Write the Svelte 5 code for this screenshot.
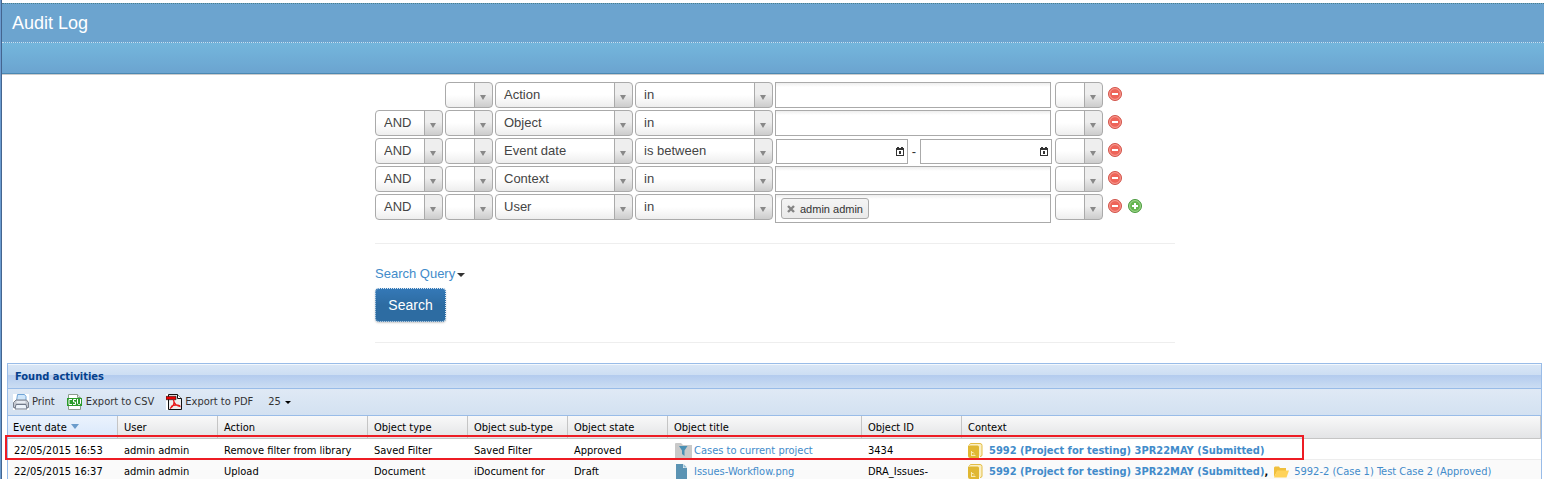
<script>
  const filters = [
    { id: 'action', join: '', field: 'Action', op: 'in', kind: 'text' },
    { id: 'object', join: 'AND', field: 'Object', op: 'in', kind: 'text' },
    { id: 'date', join: 'AND', field: 'Event date', op: 'is between', kind: 'range' },
    { id: 'context', join: 'AND', field: 'Context', op: 'in', kind: 'text' },
    { id: 'user', join: 'AND', field: 'User', op: 'in', kind: 'tags', last: true }
  ];
  const columns = ['Event date', 'User', 'Action', 'Object type', 'Object sub-type', 'Object state', 'Object title', 'Object ID', 'Context'];
  const project = '5992 (Project for testing) 3PR22MAY (Submitted)';
  const rows = [
    { cells: ['22/05/2015 16:53', 'admin admin', 'Remove filter from library', 'Saved Filter', 'Saved Filter', 'Approved'], icon: 'filter', title: 'Cases to current project', id: '3434', extra: '' },
    { cells: ['22/05/2015 16:37', 'admin admin', 'Upload', 'Document', 'iDocument for', 'Draft'], icon: 'doc', title: 'Issues-Workflow.png', id: 'DRA_Issues-', extra: '5992-2 (Case 1) Test Case 2 (Approved)' }
  ];
</script>

{#snippet pick(label, value)}
  <select class="pick" aria-label={label}><option>{value}</option></select>
{/snippet}

{#snippet dateBox(label)}
  <span class="date">
    <input type="text" aria-label={label} />
    <button type="button" aria-label="Open calendar">
      <svg width="8" height="9" viewBox="0 0 8 9" shape-rendering="crispEdges"><path fill="#333" fill-rule="evenodd" d="M0 1h1V0h2v1h2V0h2v1h1v8H0zM1 3v5h6V3zM3 4h2v3H3z" /></svg>
    </button>
  </span>
{/snippet}

<div class="shell">
  <header>
    <h1>Audit Log</h1>
    <div class="band"></div>
  </header>
  <main>
    <form class="search" onsubmit={(e) => e.preventDefault()}>
      <div class="filters">
        {#each filters as f (f.id)}
          <div class="row">
            <div>{#if f.join}{@render pick('Join', f.join)}{/if}</div>
            {@render pick('Opening bracket', '')}
            {@render pick('Field', f.field)}
            {@render pick('Operator', f.op)}
            {#if f.kind === 'text'}
              <input class="value" type="text" aria-label={f.field} />
            {:else if f.kind === 'range'}
              <div class="range">{@render dateBox('From')}<span>-</span>{@render dateBox('To')}</div>
            {:else}
              <div class="tags">
                <span class="tag">
                  <button type="button" aria-label="Remove admin admin"><svg width="8" height="8" viewBox="0 0 8 8"><path d="M1 1l6 6M7 1L1 7" stroke="#858585" stroke-width="2.4" /></svg></button>
                  admin admin
                </span>
                <input type="text" aria-label="User" />
              </div>
            {/if}
            <div class="close">{@render pick('Closing bracket', '')}</div>
            <div class="acts">
              <button type="button" aria-label="Remove condition">
                <svg width="14" height="14" viewBox="0 0 14 14"><circle cx="7" cy="7" r="6.5" fill="#ee6459" stroke="#d0564c" /><circle cx="7" cy="7" r="5.4" fill="none" stroke="#f8a59c" stroke-width=".9" /><path d="M4 7h6" stroke="#fff" stroke-width="2" /></svg>
              </button>
              {#if f.last}
                <button type="button" aria-label="Add condition">
                  <svg width="14" height="14" viewBox="0 0 14 14"><circle cx="7" cy="7" r="6.5" fill="#65b54e" stroke="#4c9a40" /><circle cx="7" cy="7" r="5.4" fill="none" stroke="#a9d998" stroke-width=".9" /><path d="M4 7h6M7 4v6" stroke="#fff" stroke-width="2" /></svg>
                </button>
              {/if}
            </div>
          </div>
        {/each}
      </div>
      <hr />
      <a class="query" href="#query">Search Query<i class="caret"></i></a>
      <button class="go" type="submit">Search</button>
      <hr class="end" />
    </form>

    <section class="panel">
      <h2>Found activities</h2>
      <div class="tools">
        <button type="button">
          <svg width="16" height="16" viewBox="0 0 16 16"><path fill="#fff" d="M0 0h16v16H0z" /><path d="M3.500 7L4.500.5h7l1.500 2v5" fill="#cfe6fa" stroke="#6fa3d6" /><path d="M.5 8.500L3 6h10.500l2 2.500v5H.5z" fill="#c3c7cf" stroke="#7a808c" /><path d="M3 10.500h10l1 4.500H2z" fill="#eef4fb" stroke="#6f7888" /><path d="M3.500 8h9" stroke="#f3f8ff" stroke-width="1.500" /></svg>
          Print
        </button>
        <button type="button" class="csv">
          <svg width="16" height="16" viewBox="0 0 16 16"><path d="M1.500.5h9l3 3v12h-12z" fill="#fff" stroke="#8c9c8c" /><path d="M10.500.5v3h3" fill="#e6eee6" stroke="#8c9c8c" /><path fill="#2b9b2a" d="M0 4h15v8H0z" /><path d="M5 5.500H2v5h3M9 5.500H6.500v2.500h2v2.500H6M10.500 5v4.500l1 1h1l1-1V5" fill="none" stroke="#fff" /></svg>
          Export to CSV
        </button>
        <button type="button" class="pdf">
          <svg width="16" height="16" viewBox="0 0 16 16"><path fill="#fff" d="M0 0h3v16H0z" /><path d="M2.500.5h9l4 4v11h-13z" fill="#eee" stroke="#111" /><path d="M11.500.5v4h4" fill="#fff" stroke="#111" /><path fill="#e80000" stroke="#111" stroke-width=".6" d="M0 2.300h10v3.400H0z" /><path d="M7.500 6c1.500 3-.5 6.500-3.500 8.500M7.500 6c.5 4 3.500 6 7 6.500M5 12.500c3-2 6-2 9-.5" fill="none" stroke="#e81818" stroke-width="1.400" /></svg>
          Export to PDF
        </button>
        <button type="button" class="size">25<i class="caret"></i></button>
      </div>
      <div class="grid">
        <table>
          <colgroup>
            <col class="w110" /><col class="w100" /><col class="w150" /><col class="w100" /><col class="w100" /><col class="w100" /><col class="w194" /><col class="w100" /><col />
          </colgroup>
          <thead>
            <tr>
              {#each columns as c, i}
                <th class:sorted={i === 0}>{c}{#if i === 0}<svg width="8" height="5" viewBox="0 0 8 5"><path d="M0 0h8L4 5z" fill="#6a9bcb" /></svg>{/if}</th>
              {/each}
            </tr>
          </thead>
          <tbody>
            {#each rows as r}
              <tr>
                {#each r.cells as c}<td>{c}</td>{/each}
                <td>
                  <span class="line">
                    {#if r.icon === 'filter'}
                      <svg width="18" height="15" viewBox="0 0 18 15"><path d="M1 1q0-1 1-1h5l2 2h9v13H1z" fill="#c9c9c9" /><path d="M5 3h8.500L10.500 7.500V13L8 11V7.500z" fill="#4a8fb3" /></svg>
                    {:else}
                      <svg width="18" height="15" viewBox="0 0 18 15"><path d="M2 0h7v4h4v11H2z" fill="#5b93b3" /><path d="M9.500 0L13 3.500H9.500z" fill="#8fb9cf" /></svg>
                    {/if}
                    <a href="#item">{r.title}</a>
                  </span>
                </td>
                <td>{r.id}</td>
                <td>
                  <span class="line">
                    <svg width="15" height="15" viewBox="0 0 15 15"><path d="M1.500 2V1.500Q2 .5 3 .5h9q2 0 2 2V12q0 1.500-2 1.500" fill="#fbf0c4" stroke="#e3bd45" /><path d="M1 2.500h8.500q1.500 0 1.500 1.500v11H2q-2 0-2-2V2.500z" fill="#e0b732" /><path d="M3.500 8v5M3.500 9.500h2M3.500 12.500h4M5.500 11h1" stroke="#f8e9b0" fill="none" /></svg>
                    <a class="strong" href="#project">{project}</a>{#if r.extra}<b>,</b>
                      <svg class="folder" width="15" height="12" viewBox="0 0 15 12"><path d="M0 11V1.500L1 .5h4l1 1.500h6v3H3.500z" fill="#f0bf3c" /><path d="M3 4.500h12L12.500 11.500H0z" fill="#ffd35a" /></svg>
                      <a href="#case">{r.extra}</a>
                    {/if}
                  </span>
                </td>
              </tr>
            {/each}
          </tbody>
        </table>
        <div class="highlight"></div>
      </div>
    </section>
  </main>
</div>

<style>
  :global(body) { overflow: hidden; background: #fff; }
  .shell {
    box-sizing: border-box; min-height: 100vh; padding-top: 3px;
    border-left: 1px solid #6a9bd0; box-shadow: inset 1px 0 #44658f;
    padding-left: 1px; font: 13px/18px "Liberation Sans", Arial, sans-serif; color: #444;
  }
  button { font: inherit; color: inherit; background: none; border: 0; padding: 0; }
  input, select { font: inherit; color: inherit; box-sizing: border-box; }
  svg { display: block; flex: none; }
  header { border-bottom: 1px solid #ccc; }
  h1 {
    margin: 0; padding: 0 10px; font-size: 18px; line-height: 38px; font-weight: 400; color: #fff;
    background: #6ca4cf; border-top: 1px dotted #4a7f8c; border-bottom: 1px dotted #c8e0f0;
  }
  .band { height: 30px; background: linear-gradient(#74b6dc, #6ba4d0); border-bottom: 1px solid #4a88b2; }
  main { padding: 7px 2px 0 5px; }
  .search { max-width: 800px; margin: 0 auto; padding-left: 1px; }
  .filters { display: grid; gap: 2px; }
  .row { display: grid; grid-template-columns: 68px 48px 138px 138px 276px 50px auto; gap: 2px; align-items: start; }
  .pick {
    display: block; width: 100%; height: 26px; padding: 0 20px 0 8px; margin: 0;
    appearance: none; border: 1px solid #aaa; border-radius: 4px; outline: 0;
    background:
      url("data:image/svg+xml,%3Csvg xmlns='http://www.w3.org/2000/svg' width='6' height='5'%3E%3Cpath d='M0 0h6L3 5z' fill='%23888'/%3E%3C/svg%3E") right 6px top 12px no-repeat,
      linear-gradient(#aaa, #aaa) right 17px top / 1px 100% no-repeat,
      linear-gradient(#eee 45%, #ccc) right / 17px 100% no-repeat,
      linear-gradient(#fff 50%, #eee);
  }
  .value, .tags { width: 100%; height: 26px; padding: 0 5px; margin: 0; border: 1px solid #aaa; outline: 0; background: linear-gradient(#eee, #fff 4px); }
  .tags { box-sizing: border-box; height: 29px; display: flex; align-items: center; }
  .tags input { flex: 1; min-width: 0; border: 0; outline: 0; background: none; }
  .tag {
    display: flex; align-items: center; gap: 5px; height: 19px; padding: 0 5px; font-size: 11px; color: #333; white-space: nowrap;
    border: 1px solid #aaa; border-radius: 3px; background: linear-gradient(#f4f4f4, #eaeaea);
  }
  .range { display: flex; align-items: center; justify-content: space-between; padding: 1px 0 0 1px; margin-right: -1px; color: #333; }
  .date { display: flex; box-sizing: border-box; width: 132px; height: 25px; padding-right: 3px; align-items: center; border: 1px solid #aaa; }
  .date input { flex: 1; min-width: 0; border: 0; outline: 0; background: none; }
  .close { padding-left: 2px; }
  .acts { display: flex; gap: 6px; padding: 5px 0 0 3px; }
  hr { margin: 20px 0; border: 0; border-top: 1px solid #eee; }
  .query { display: table; color: #428bca; text-decoration: none; line-height: 20px; }
  .caret { display: inline-block; margin-left: 2px; vertical-align: middle; border: 4px solid transparent; border-top-color: #333; border-bottom: 0; }
  .go {
    display: block; height: 34px; min-width: 71px; margin-top: 4px; padding: 0 12px; font-size: 14px; color: #fff; border-radius: 4px;
    border: 1px dotted #dce9f5; background: linear-gradient(#3579b8, #2d6ca2 50%) border-box; box-shadow: 0 1px 2px #ccc;
  }
  .panel { border: 1px solid #99bce8; font: 11px/14px "DejaVu Sans Condensed", Tahoma, "DejaVu Sans", sans-serif; color: #000; }
  h2 {
    margin: 0; padding: 2px 7px 0; font-size: 11px; line-height: 22px; color: #04408c; border-bottom: 1px solid #99bce8;
    background: linear-gradient(#dae7f6, #cddef3 45%, #b3cbee 46%, #cbddf3); box-shadow: inset 0 1px #f3f8fd;
  }
  .tools { display: flex; align-items: center; height: 26px; padding-left: 5px; color: #333; background: linear-gradient(#dfe9f5, #d3e1f1); border-bottom: 1px solid #99bce8; }
  .tools button { display: flex; align-items: center; gap: 3px; margin-right: 12px; line-height: 16px; white-space: nowrap; }
  .tools .caret { margin-left: 1px; border-width: 3px; border-bottom: 0; border-top-color: #000; }
  .tools .size { margin-left: 3px; }
  .grid { position: relative; }
  table { width: 100%; border-collapse: separate; border-spacing: 0; table-layout: fixed; }
  .w110 { width: 110px; } .w100 { width: 100px; } .w150 { width: 150px; } .w194 { width: 194px; }
  th {
    box-sizing: border-box; height: 23px; padding: 2px 5px 0; font-weight: 400; text-align: left; white-space: nowrap;
    background: linear-gradient(#f9f9f9, #e3e4e6); border-right: 1px solid #c5c5c5; border-bottom: 1px solid #c5c5c5;
  }
  th.sorted { background: linear-gradient(#ebf3fd, #d9e8fb); }
  th svg { display: inline-block; margin-left: 4px; vertical-align: 2px; }
  td { box-sizing: border-box; height: 21px; padding: 3px 5px 0 6px; white-space: nowrap; border-bottom: 1px solid #ededed; }
  td:not(:first-child), th:not(:first-child) { padding-left: 6px; }
  tbody tr:nth-child(even) { background: #fafafa; }
  .line { display: flex; align-items: center; }
  .line a { color: #428bca; text-decoration: none; margin-left: 2px; }
  .line .strong { font-weight: 700; margin-left: 6px; }
  .folder { margin-left: 6px; }
  .folder + a { margin-left: 5px; }
  .highlight { position: absolute; left: -3px; top: 19px; width: 1299px; height: 25px; box-sizing: border-box; border: 2px solid #ed1c24; pointer-events: none; }
</style>
